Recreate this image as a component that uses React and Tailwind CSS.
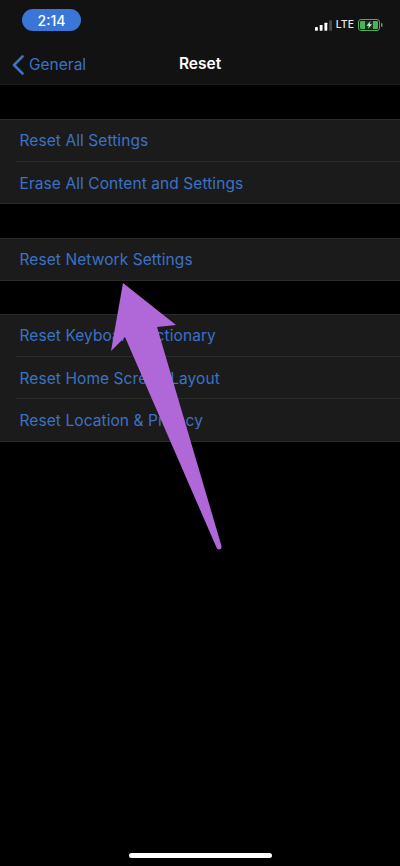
const font = { fontFamily: "Inter, 'Liberation Sans', sans-serif" };

function Row({ children, last }) {
  return (
    <div className="h-[42.5px] pl-[19.5px] pt-[2px] flex flex-col justify-center relative">
      <span className="text-[15.5px] leading-5 text-[#3c72c6] tracking-[0.08px]">{children}</span>
      {!last && <div className="absolute left-[16px] right-0 bottom-0 h-px bg-[#2b2b2c]" />}
    </div>
  );
}

function Group({ children, className }) {
  return (
    <div className={"bg-[#1b1b1c] shadow-[inset_0_1px_0_#2a2a2b,inset_0_-1px_0_#2a2a2b] " + className}>{children}</div>
  );
}

export default function App() {
  return (
    <div className="relative w-[400px] h-[866px] bg-black overflow-hidden" style={font}>
      <header className="h-[85px] bg-[#121212] border-b border-[#1c1c1c] flex flex-col">
        <div className="h-[44px] flex items-start justify-between">
          <div className="ml-[22px] mt-[9px] w-[59px] h-[22px] rounded-full bg-[#3a76d8] flex items-center justify-center text-white text-[14px] font-medium">2:14</div>
          <div className="mt-[19px] mr-[17px] flex items-center gap-[4px]">
            <svg width="17" height="11" viewBox="0 0 18 11">
              <rect x="0" y="7" width="3" height="4" rx="0.5" fill="#fff" />
              <rect x="5" y="5" width="3" height="6" rx="0.5" fill="#fff" />
              <rect x="10" y="2.5" width="3" height="8.5" rx="0.5" fill="#fff" />
              <rect x="15" y="0" width="3" height="11" rx="0.5" fill="#4a4a4a" />
            </svg>
            <span className="text-[10.5px] leading-none font-medium text-[#e8e8e8]">LTE</span>
            <svg width="25" height="12" viewBox="0 0 25 12">
              <rect x="0.5" y="0.5" width="21" height="11" rx="2.5" fill="none" stroke="#4cb05a" />
              <rect x="2" y="2" width="18" height="8" rx="1.2" fill="#46b457" />
              <rect x="7" y="2" width="8" height="8" fill="#15351b" />
              <path d="M12.5 2 L8.5 6.8 H11 L9.8 10 L14 5.2 H11.5 Z" fill="#d8f0d8" />
              <rect x="23" y="4" width="1.5" height="4" rx="0.7" fill="#4cb05a" />
            </svg>
          </div>
        </div>
        <div className="relative h-[40px] flex items-center justify-center">
          <div className="absolute left-[12px] top-[9px] flex items-center gap-[5px]">
            <svg width="12" height="20" viewBox="0 0 12 20" fill="none">
              <path d="M10.5 1.5 L2 10 L10.5 18.5" stroke="#3c72c6" strokeWidth="2.6" strokeLinecap="round" strokeLinejoin="round" />
            </svg>
            <span className="text-[15.5px] text-[#3c72c6]">General</span>
          </div>
          <span className="text-[15.5px] font-semibold text-white">Reset</span>
        </div>
      </header>

      <Group className="mt-[34px]">
        <Row>Reset All Settings</Row>
        <Row last>Erase All Content and Settings</Row>
      </Group>
      <Group className="mt-[34px]">
        <Row last>Reset Network Settings</Row>
      </Group>
      <Group className="mt-[33.5px]">
        <Row>Reset Keyboard Dictionary</Row>
        <Row>Reset Home Screen Layout</Row>
        <Row last>Reset Location &amp; Privacy</Row>
      </Group>

      <svg className="absolute left-0 top-0 pointer-events-none" width="400" height="866" viewBox="0 0 400 866">
        <path
          d="M123 283 L176 325 L157 327 L221.5 546 Q222 549 219.5 549.5 Q217.5 550 216.5 547.5 L125 337 L111 351 Z"
          fill="#b068d8"
        />
      </svg>

      <div className="absolute left-[129px] bottom-[8px] w-[143px] h-[5px] rounded-full bg-white" />
    </div>
  );
}
